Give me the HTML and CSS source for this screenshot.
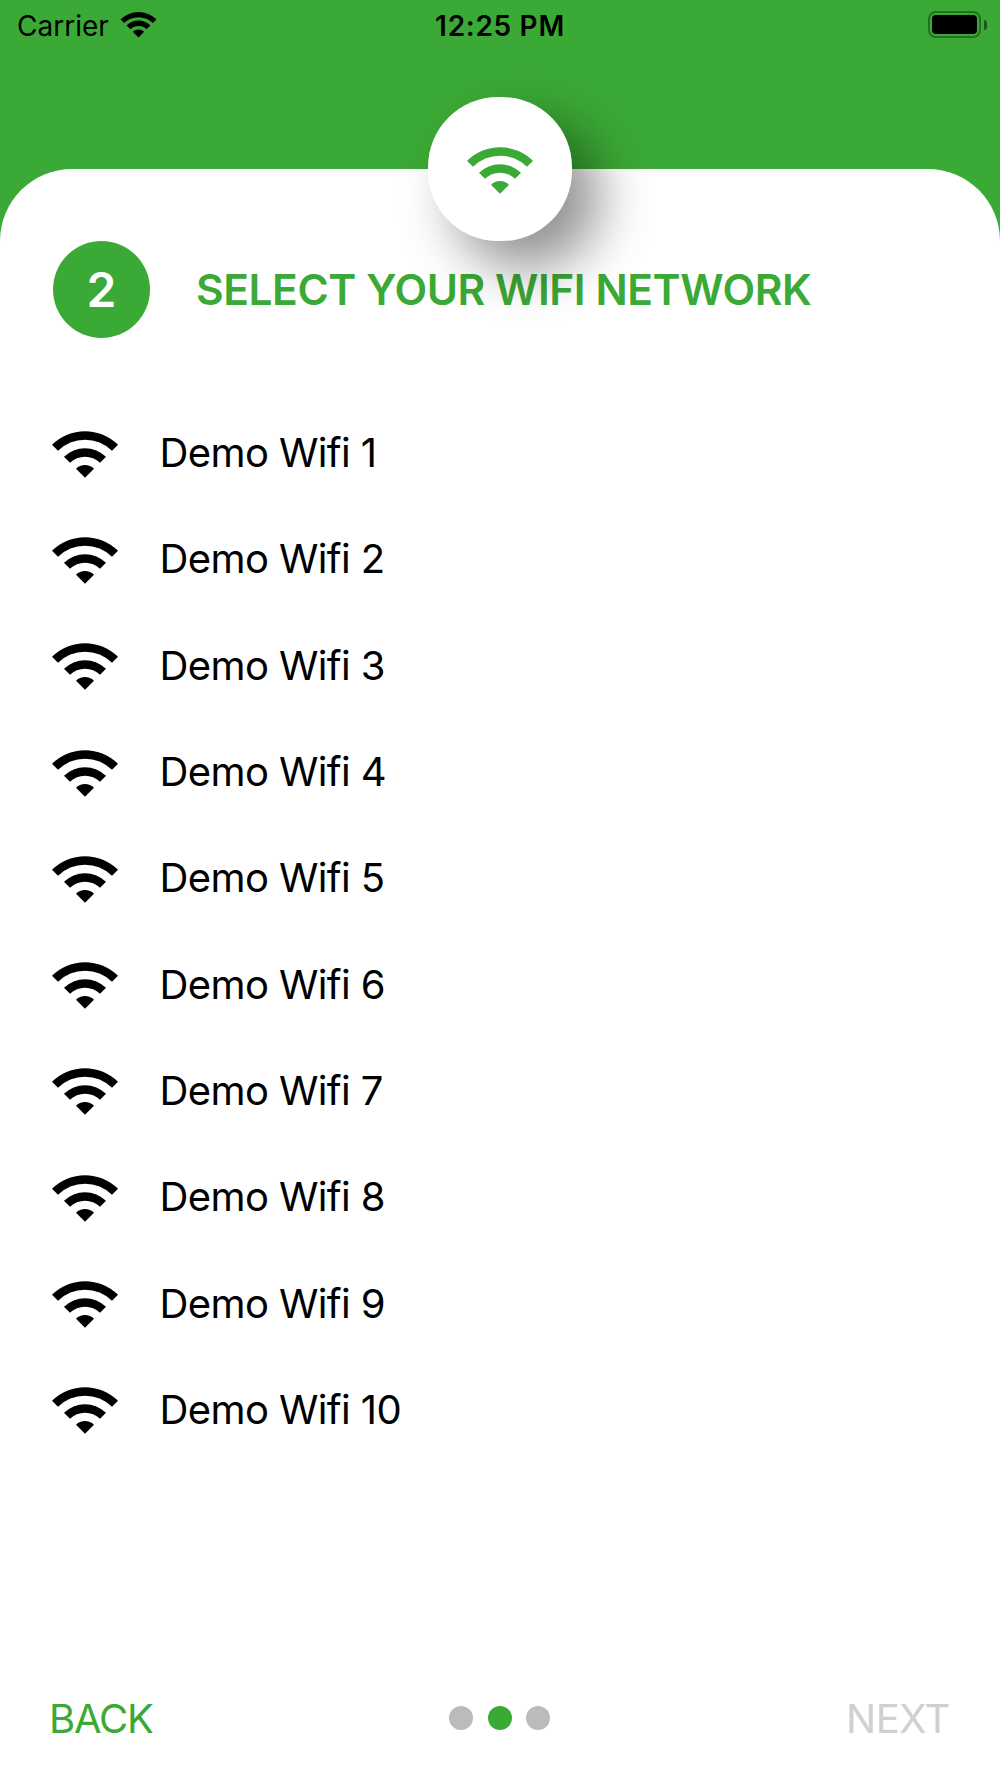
FILE: index.html
```html
<!DOCTYPE html>
<html lang="en">
<head>
  <meta charset="UTF-8">
  <meta name="viewport" content="width=device-width, initial-scale=1.0">
  <title>Select your wifi network</title>
  <link rel="stylesheet" href="styles.css">
</head>
<body>
  <svg class="sprite" aria-hidden="true">
    <symbol id="wifi" viewBox="0 0 66 46.7">
      <path d="M0 13.7A46.7 46.7 0 0 1 66 13.7L60 19.7A38.2 38.2 0 0 0 6 19.7Z"/>
      <path d="M12 25.7A29.7 29.7 0 0 1 54 25.7L48 31.7A21.2 21.2 0 0 0 18 31.7Z"/>
      <path d="M24 37.7A12.7 12.7 0 0 1 42 37.7L33 46.7Z"/>
    </symbol>
  </svg>

  <header class="status-bar">
    <div class="carrier">
      <span class="carrier-name">Carrier</span>
      <svg class="status-wifi" viewBox="0 0 37 27">
        <path d="M.5 8.3A25.8 25.8 0 0 1 36.5 8.3L32.8 12A20.4 20.4 0 0 0 4.2 12Z"/>
        <path d="M6.6 14.4A17 17 0 0 1 30.4 14.4L26.5 18.2A11.4 11.4 0 0 0 10.5 18.2Z"/>
        <path d="M12.8 20.8A8.4 8.4 0 0 1 24.2 20.8L18.5 26.6Z"/>
      </svg>
    </div>
    <div class="time">12:25 PM</div>
    <div class="battery">
      <div class="battery-body"><div class="battery-level"></div></div>
      <div class="battery-tip"></div>
    </div>
  </header>

  <main class="card">
    <div class="badge">
      <svg class="wifi-icon"><use href="#wifi"/></svg>
    </div>

    <div class="step">
      <div class="step-number">2</div>
      <h1 class="step-title">SELECT YOUR WIFI NETWORK</h1>
    </div>

    <ul class="networks">
      <li class="network"><svg class="wifi-icon"><use href="#wifi"/></svg><span>Demo Wifi 1</span></li>
      <li class="network"><svg class="wifi-icon"><use href="#wifi"/></svg><span>Demo Wifi 2</span></li>
      <li class="network"><svg class="wifi-icon"><use href="#wifi"/></svg><span>Demo Wifi 3</span></li>
      <li class="network"><svg class="wifi-icon"><use href="#wifi"/></svg><span>Demo Wifi 4</span></li>
      <li class="network"><svg class="wifi-icon"><use href="#wifi"/></svg><span>Demo Wifi 5</span></li>
      <li class="network"><svg class="wifi-icon"><use href="#wifi"/></svg><span>Demo Wifi 6</span></li>
      <li class="network"><svg class="wifi-icon"><use href="#wifi"/></svg><span>Demo Wifi 7</span></li>
      <li class="network"><svg class="wifi-icon"><use href="#wifi"/></svg><span>Demo Wifi 8</span></li>
      <li class="network"><svg class="wifi-icon"><use href="#wifi"/></svg><span>Demo Wifi 9</span></li>
      <li class="network"><svg class="wifi-icon"><use href="#wifi"/></svg><span>Demo Wifi 10</span></li>
    </ul>

    <footer class="nav">
      <button class="nav-btn">BACK</button>
      <div class="dots">
        <span class="dot"></span>
        <span class="dot active"></span>
        <span class="dot"></span>
      </div>
      <button class="nav-btn next" disabled>NEXT</button>
    </footer>
  </main>
</body>
</html>
```
FILE: styles.css
```css
* {
  box-sizing: border-box;
}
body {
  margin: 0;
  height: 1778px;
  display: flex;
  flex-direction: column;
  overflow: hidden;
  background: #3ba935;
  color: #000;
  font-family: Inter, "Liberation Sans", sans-serif;
}
.sprite {
  position: absolute;
  width: 0;
  height: 0;
}

/* status bar */
.status-bar {
  display: grid;
  grid-template-columns: 1fr auto 1fr;
  align-items: center;
  height: 52px;
  margin-bottom: 117px;
  padding: 0 13px 0 16px;
  font-size: 28px;
  line-height: 52px;
}
.carrier {
  display: flex;
  align-items: center;
  gap: 11px;
  padding-left: 1px;
}
.status-wifi {
  width: 37px;
  height: 27px;
  margin-bottom: 4px;
}
.time {
  margin-left: -3px;
  font-weight: 600;
  letter-spacing: 0.7px;
}
.battery {
  display: flex;
  align-items: center;
  justify-content: flex-end;
  gap: 3px;
  margin-bottom: 3px;
}
.battery-body {
  width: 53px;
  height: 27px;
  padding: 2px;
  border: 2px solid #267022;
  border-radius: 8px;
}
.battery-level {
  height: 100%;
  border-radius: 4px;
  background: #000;
}
.battery-tip {
  width: 3px;
  height: 10px;
  border-radius: 0 4px 4px 0;
  background: #1d551a;
}

/* card */
.card {
  position: relative;
  flex: 1;
  display: flex;
  flex-direction: column;
  border-radius: 72px 72px 0 0;
  background: #fff;
}
.badge {
  position: absolute;
  top: -72px;
  left: 50%;
  display: flex;
  align-items: center;
  justify-content: center;
  width: 144px;
  height: 144px;
  margin-left: -72px;
  padding-top: 2px;
  border-radius: 70px;
  background: #fff;
  box-shadow: 27px 27px 54px rgba(0, 0, 0, 0.44);
  color: #3ba935;
}
.wifi-icon {
  flex: none;
  width: 66px;
  height: 47px;
  fill: currentColor;
}

.step {
  display: flex;
  align-items: center;
  gap: 46px;
  padding: 72px 53px 0;
}
.step-number {
  width: 97px;
  height: 97px;
  border-radius: 50%;
  background: #3ba935;
  color: #fff;
  font-size: 48px;
  font-weight: 600;
  line-height: 97px;
  text-align: center;
}
.step-title {
  margin: 0;
  color: #3ba935;
  font-size: 42.5px;
  font-weight: 600;
  letter-spacing: -0.43px;
  white-space: nowrap;
}

.networks {
  margin: 63px 0 0;
  padding: 0 51.5px;
  list-style: none;
}
.network {
  display: flex;
  align-items: center;
  gap: 42px;
  height: 106.3px;
  font-size: 40px;
  letter-spacing: -0.6px;
}
.network span {
  padding-bottom: 3px;
}

/* bottom navigation */
.nav {
  display: grid;
  grid-template-columns: 1fr auto 1fr;
  align-items: center;
  margin-top: auto;
  padding: 0 50px 30px 49px;
}
.nav-btn {
  padding: 2px 0 0;
  border: none;
  background: none;
  color: #3ba935;
  font-family: inherit;
  font-size: 40px;
  letter-spacing: -1.2px;
  line-height: 58px;
  text-align: left;
}
.nav-btn.next {
  color: #d0d0d0;
  letter-spacing: -0.4px;
  text-align: right;
}
.dots {
  display: flex;
  gap: 14.6px;
}
.dot {
  width: 24px;
  height: 24px;
  border-radius: 50%;
  background: #b9bbbd;
}
.dot.active {
  background: #3ba935;
}
```
